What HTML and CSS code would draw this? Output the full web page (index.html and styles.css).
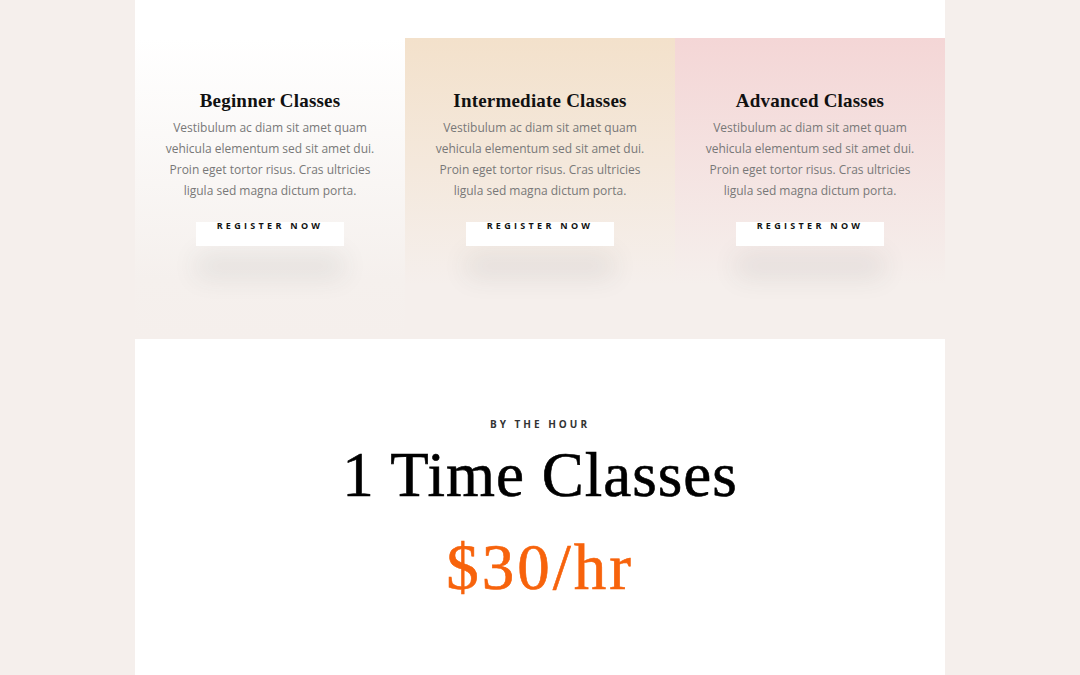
FILE: index.html
```html
<!DOCTYPE html>
<html lang="en">
<head>
<meta charset="utf-8">
<title>Classes</title>
<link rel="stylesheet" href="styles.css">
</head>
<body>
<div class="page">
  <section class="levels">
    <div class="card card-beginner">
      <h3 class="card-title">Beginner Classes</h3>
      <p class="card-text">Vestibulum ac diam sit amet quam vehicula elementum sed sit amet dui. Proin eget tortor risus. Cras ultricies ligula sed magna dictum porta.</p>
      <a class="btn" href="#">Register Now</a>
    </div>
    <div class="card card-intermediate">
      <h3 class="card-title">Intermediate Classes</h3>
      <p class="card-text">Vestibulum ac diam sit amet quam vehicula elementum sed sit amet dui. Proin eget tortor risus. Cras ultricies ligula sed magna dictum porta.</p>
      <a class="btn" href="#">Register Now</a>
    </div>
    <div class="card card-advanced">
      <h3 class="card-title">Advanced Classes</h3>
      <p class="card-text">Vestibulum ac diam sit amet quam vehicula elementum sed sit amet dui. Proin eget tortor risus. Cras ultricies ligula sed magna dictum porta.</p>
      <a class="btn" href="#">Register Now</a>
    </div>
  </section>
  <section class="hourly">
    <p class="eyebrow">By the hour</p>
    <h2 class="hourly-title">1 Time Classes</h2>
    <p class="price">$30/hr</p>
  </section>
</div>
</body>
</html>
```

FILE: styles.css
```css
* { box-sizing: border-box; }
html, body { margin: 0; padding: 0; }
body {
  background: #f5efec;
  font-family: "Open Sans", "Liberation Sans", sans-serif;
}
.page {
  width: 810px;
  margin: 0 auto;
}
.levels {
  display: grid;
  grid-template-columns: repeat(3, 1fr);
  background: linear-gradient(#ffffff 0, #ffffff 38px, transparent 38px);
  padding-top: 38px;
  height: 339px;
}
.card {
  display: flex;
  flex-direction: column;
  align-items: center;
  padding: 51px 10px 0;
  text-align: center;
}
.card-beginner { background: linear-gradient(#ffffff 0%, #f5f0ed 80%, #f5efec 100%); }
.card-intermediate { background: linear-gradient(#f3e1cb 0%, #f5efec 82%, #f5efec 100%); }
.card-advanced { background: linear-gradient(#f4d6d6 0%, #f5efec 82%, #f5efec 100%); }
.card-title {
  margin: 0;
  font-family: "Liberation Serif", "DejaVu Serif", serif;
  font-weight: 700;
  font-size: 19px;
  line-height: 24px;
  letter-spacing: 0.2px;
  color: #111;
}
.card-text {
  margin: 4px 0 0;
  max-width: 226px;
  font-size: 12px;
  line-height: 21px;
  color: #787878;
}
.btn {
  margin-top: 21px;
  display: block;
  width: 148px;
  height: 24px;
  padding-top: 0;
  background: #fff;
  color: #111;
  text-decoration: none;
  text-transform: uppercase;
  font-size: 9px;
  font-weight: 700;
  letter-spacing: 3.3px;
  line-height: 8px;
  box-shadow: 0 32px 26px rgba(60, 64, 75, 0.085);
}
.hourly {
  background: #fff;
  height: 340px;
  display: flex;
  flex-direction: column;
  align-items: center;
  padding-top: 78px;
}
.eyebrow {
  margin: 0;
  font-size: 10px;
  font-weight: 700;
  letter-spacing: 3px;
  text-transform: uppercase;
  color: #333;
  line-height: 14px;
}
.hourly-title {
  margin: 8px 0 0;
  font-family: "Liberation Serif", "DejaVu Serif", serif;
  font-weight: 400;
  font-size: 63px;
  line-height: 72px;
  letter-spacing: 1px;
  color: #000;
  -webkit-text-stroke: 0.6px #000;
}
.price {
  margin: 20px 0 0;
  font-family: "Liberation Serif", "DejaVu Serif", serif;
  font-size: 65px;
  line-height: 72px;
  letter-spacing: 3px;
  color: #f7630c;
  -webkit-text-stroke: 0.6px #f7630c;
}
```
